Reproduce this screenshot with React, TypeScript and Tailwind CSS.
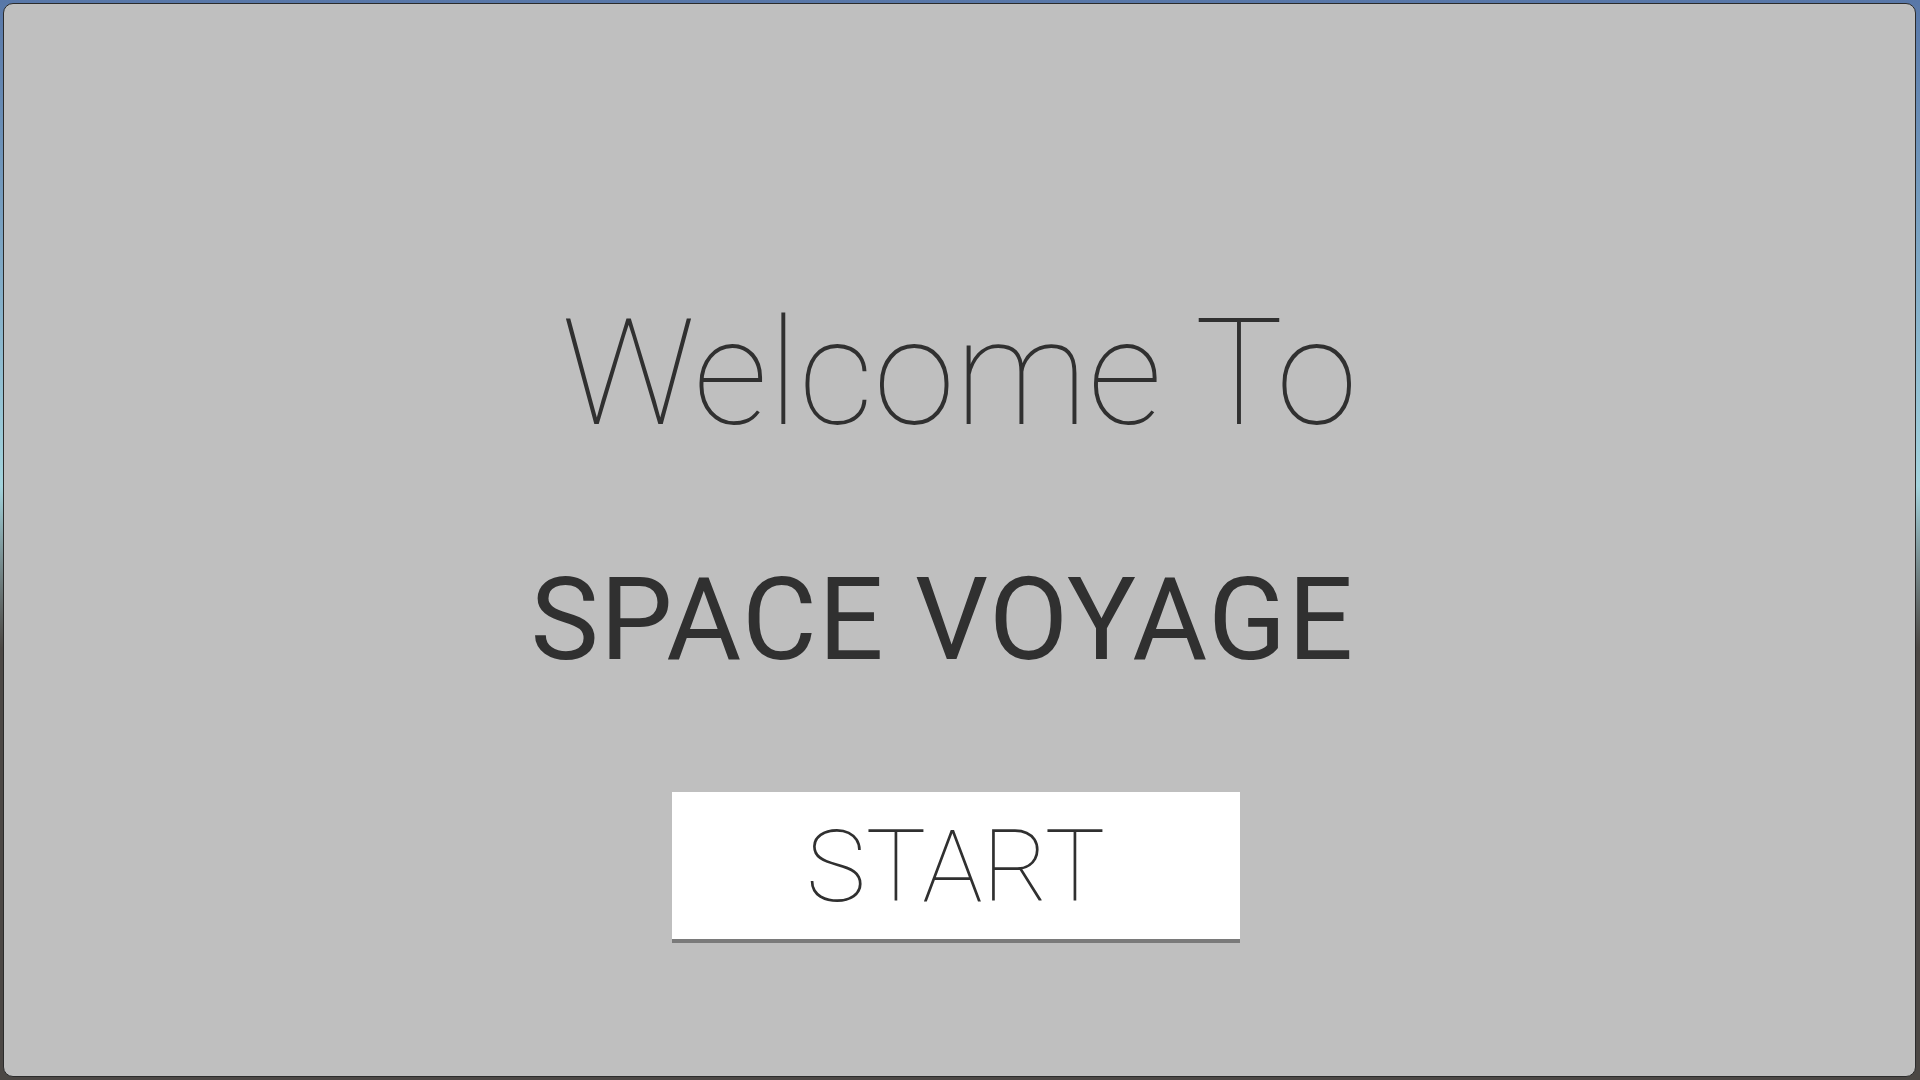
import React from "react";

const App = () => {
  return (
    <div className="w-screen h-screen flex p-[3px] pr-[4px] bg-linear-to-b from-[#5877a8] via-[#a3d3dc] via-45% to-[#4b4744] to-60%">
      <div
        className="flex-1 flex flex-col items-center rounded-[10px] border border-[#2b2b2b] bg-[#bfbfbf] text-[#303030]"
        style={{ fontFamily: "Roboto, 'Open Sans', sans-serif" }}
      >
        <h1 className="mt-[296px] text-[148px] leading-none font-thin">Welcome To</h1>
        <h2 className="mt-[114px] mr-[34px] text-[115px] leading-none font-normal tracking-[1.4px]">
          SPACE VOYAGE
        </h2>
        <button className="mt-[115px] mr-[8px] w-[568px] h-[151px] bg-white border-b-[4px] border-[#7a7a7a] flex items-center justify-center pt-[1px]">
          <span className="text-[101px] leading-none font-thin">START</span>
        </button>
      </div>
    </div>
  );
};

export default App;
